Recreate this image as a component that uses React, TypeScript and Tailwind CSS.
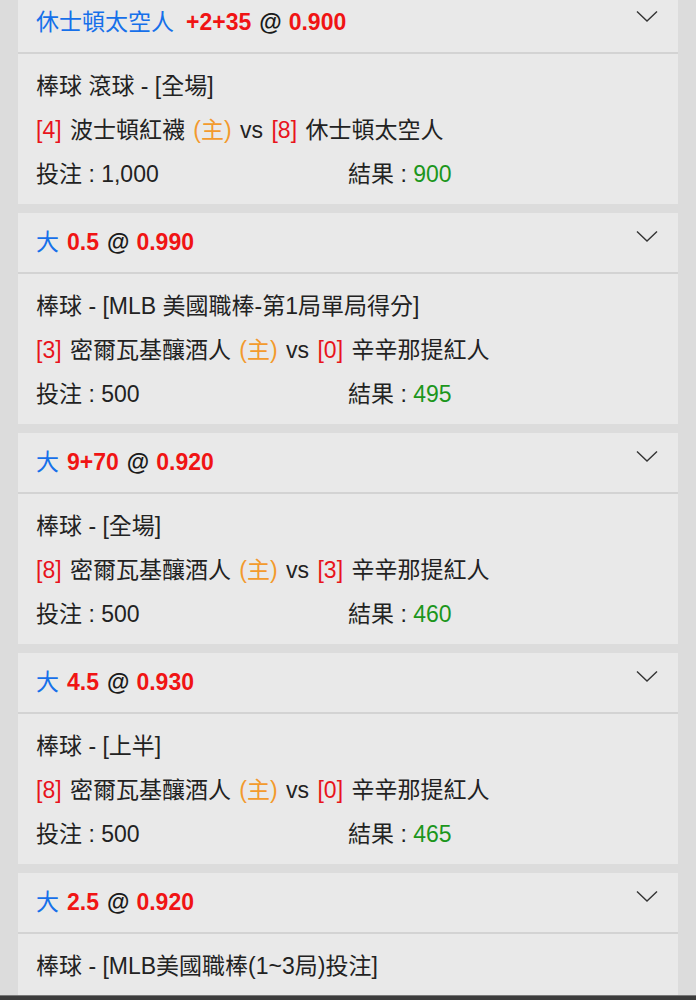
const font = "font-['Liberation_Sans','Noto_Sans_CJK_TC',sans-serif]";

type Bet = {
  pick: string;
  line: string;
  odds: string;
  league: string;
  home?: [string, string];
  away?: [string, string];
  stake?: string;
  result?: string;
};

const bets: Bet[] = [
  { pick: "休士頓太空人", line: "+2+35", odds: "0.900", league: "棒球 滾球 - [全場]", home: ["4", "波士頓紅襪"], away: ["8", "休士頓太空人"], stake: "1,000", result: "900" },
  { pick: "大", line: "0.5", odds: "0.990", league: "棒球 - [MLB 美國職棒-第1局單局得分]", home: ["3", "密爾瓦基釀酒人"], away: ["0", "辛辛那提紅人"], stake: "500", result: "495" },
  { pick: "大", line: "9+70", odds: "0.920", league: "棒球 - [全場]", home: ["8", "密爾瓦基釀酒人"], away: ["3", "辛辛那提紅人"], stake: "500", result: "460" },
  { pick: "大", line: "4.5", odds: "0.930", league: "棒球 - [上半]", home: ["8", "密爾瓦基釀酒人"], away: ["0", "辛辛那提紅人"], stake: "500", result: "465" },
  // last card runs past the bottom of the screen, only its first row is visible
  { pick: "大", line: "2.5", odds: "0.920", league: "棒球 - [MLB美國職棒(1~3局)投注]" },
];

function Chevron() {
  return (
    <svg width="22" height="13" viewBox="0 0 22 13" fill="none" className="shrink-0">
      <path d="M1 1.5 L11 11 L21 1.5" stroke="#333" strokeWidth="1.4" />
    </svg>
  );
}

function BetCard({ bet }: { bet: Bet }) {
  return (
    <div className="bg-[#e9e9e9]">
      <div className="flex h-[61px] items-center justify-between border-b-2 border-[#d3d3d3] pl-[18px] pr-[20px]">
        <p className="flex items-baseline text-[23px]">
          <span className={`${bet.pick.length > 1 ? "mr-[12px]" : "mr-[8px]"} text-[#1670ea]`}>{bet.pick}</span>
          <span className="mr-[8px] font-bold text-[#f01414]">{bet.line}</span>
          <span className="mr-[7px] font-bold text-[#1a1a1a]">@</span>
          <span className="font-bold text-[#f01414]">{bet.odds}</span>
        </p>
        <div className="-mt-3">
          <Chevron />
        </div>
      </div>
      <div className={`px-[18px] pt-[10px] text-[23px] leading-[44px] text-[#222] ${bet.home ? "pb-[8px]" : "pb-[80px]"}`}>
        <p>{bet.league}</p>
        {bet.home && bet.away && (
          <>
            <p className="[word-spacing:2px]">
              <span className="text-[#e8141c]">[{bet.home[0]}]</span> {bet.home[1]}{" "}
              <span className="text-[#f39a2c]">(主)</span> vs{" "}
              <span className="text-[#e8141c]">[{bet.away[0]}]</span> {bet.away[1]}
            </p>
            <div className="grid grid-cols-2">
              <p>投注 : {bet.stake}</p>
              <p>
                結果 : <span className="text-[#1c961c]">{bet.result}</span>
              </p>
            </div>
          </>
        )}
      </div>
    </div>
  );
}

export default function App() {
  return (
    <div className={`relative h-[1000px] overflow-hidden bg-[#dcdcdc] ${font}`}>
      <div className="-mt-[7px] flex flex-col gap-[9px] px-[18px]">
        {bets.map((bet, i) => (
          <BetCard key={i} bet={bet} />
        ))}
      </div>
      <div className="absolute inset-x-0 bottom-0 h-[5px] border-t border-[#777] bg-[#3c3c3c]" />
    </div>
  );
}
